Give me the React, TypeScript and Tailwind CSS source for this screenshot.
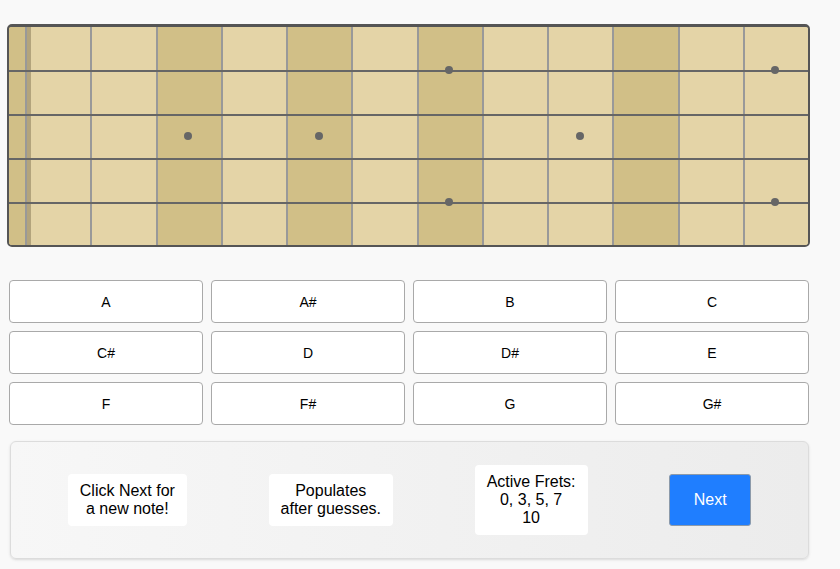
import React from 'react';

const NOTES = ['A', 'A#', 'B', 'C', 'C#', 'D', 'D#', 'E', 'F', 'F#', 'G', 'G#'];
const ACTIVE_FRETS = [0, 3, 5, 7, 10];
const FRETS = [1, 2, 3, 4, 5, 6, 7, 8, 9, 10, 11, 12];

// inlay dots per fret, as full class strings
const DOTS: Record<number, string[]> = {
  3: ['top-[105px]'],
  5: ['top-[105px]'],
  7: ['top-[39px]', 'top-[171px]'],
  9: ['top-[105px]'],
  12: ['top-[39px]', 'top-[171px]'],
};

const STRINGS = ['top-[43px]', 'top-[87px]', 'top-[131px]', 'top-[175px]'];

function Fretboard() {
  return (
    <div className="relative flex w-[803px] h-[223px] ml-[7px] rounded-[5px] border-2 border-t-[3px] border-[#555] overflow-hidden bg-[#e4d4a7]">
      {/* open strings column */}
      <div className="w-[18px] shrink-0 border-r-2 border-[#999] bg-[#d1bf87]" />

      {FRETS.map((fret) => {
        const active = ACTIVE_FRETS.includes(fret);
        return (
          <div
            key={fret}
            className={`relative flex-1 ${fret < 12 ? 'border-r-2 border-[#999]' : ''} ${
              active ? 'bg-[#d1bf87]' : 'bg-[#e4d4a7]'
            }`}
          >
            {fret === 1 && <div className="absolute left-0 top-0 bottom-0 w-1 bg-[#b3a47c]" />}
            {(DOTS[fret] || []).map((pos) => (
              <div
                key={pos}
                className={`absolute z-[2] ${pos} left-1/2 -ml-[5px] w-2 h-2 rounded-full bg-[#666]`}
              />
            ))}
          </div>
        );
      })}

      {/* strings */}
      <div className="absolute inset-0 z-[1] pointer-events-none">
        {STRINGS.map((pos) => (
          <div key={pos} className={`absolute left-0 right-0 h-[2px] bg-[#666] ${pos}`} />
        ))}
      </div>
    </div>
  );
}

export default function App() {
  return (
    <div className="min-h-screen bg-[#f9f9f9] pt-[24px] font-['Liberation_Sans',Arial,sans-serif] text-black">
      <Fretboard />

      {/* Note buttons */}
      <div className="grid grid-cols-4 gap-2 w-[800px] ml-[9px] mt-[33px]">
        {NOTES.map((note) => (
          <button
            key={note}
            className="h-[43px] bg-white border border-[#a9a9a9] rounded-[4px] text-sm text-black"
          >
            {note}
          </button>
        ))}
      </div>

      {/* Status panel */}
      <div className="flex items-center justify-around w-[799px] h-[118px] ml-[10px] mt-4 px-4 rounded-md border border-[#dcdcdc] bg-linear-to-r from-[#f7f7f7] to-[#ececec] shadow-sm">
        <div className="bg-white rounded-[4px] px-3 py-2 text-base leading-[18px] text-center">
          Click Next for
          <br />
          a new note!
        </div>
        <div className="bg-white rounded-[4px] px-3 py-2 text-base leading-[18px] text-center">
          Populates
          <br />
          after guesses.
        </div>
        <div className="bg-white rounded-[4px] px-3 py-2 text-base leading-[18px] text-center">
          Active Frets:
          <br />
          0, 3, 5, 7
          <br />
          10
        </div>
        <button className="w-[82px] h-[52px] rounded-[3px] border border-[#8c9aaa] bg-[#1f7eff] text-white text-base">
          Next
        </button>
      </div>
    </div>
  );
}
